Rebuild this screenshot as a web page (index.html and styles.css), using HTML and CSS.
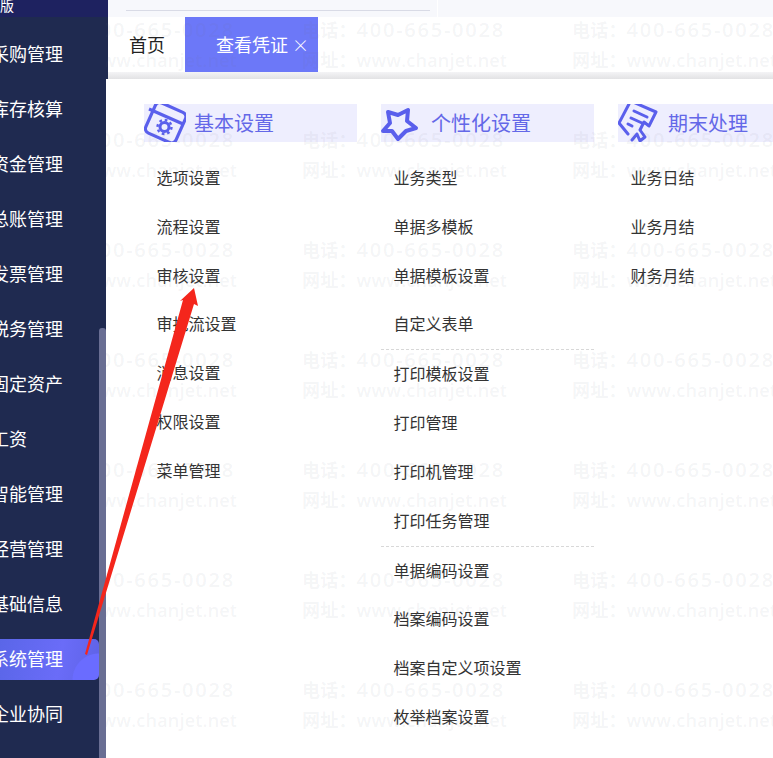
FILE: index.html
```html
<!DOCTYPE html>
<html lang="zh-CN">
<head>
<meta charset="utf-8">
<title>系统管理</title>
<link rel="stylesheet" href="styles.css">
</head>
<body>
<div class="app">
  <aside class="sidebar">
    <div class="brand">版</div>
    <nav class="nav">
      <div class="nav-item">采购管理</div>
      <div class="nav-item">库存核算</div>
      <div class="nav-item">资金管理</div>
      <div class="nav-item">总账管理</div>
      <div class="nav-item">发票管理</div>
      <div class="nav-item">税务管理</div>
      <div class="nav-item">固定资产</div>
      <div class="nav-item">工资</div>
      <div class="nav-item">智能管理</div>
      <div class="nav-item">经营管理</div>
      <div class="nav-item">基础信息</div>
      <div class="nav-item active">系统管理</div>
      <div class="nav-item">企业协同</div>
    </nav>
    <div class="scrollbar"></div>
  </aside>
  <main class="main">
    <div class="topbar"><div class="topline"></div><div class="topdivider"></div></div>
    <div class="tabs">
      <div class="tab">首页</div>
      <div class="tab tab-active">查看凭证<span class="close">×</span></div>
    </div>
    <div class="shadow"></div>
    <div class="panel">
      <section class="col">
        <h2 class="head">
          <svg class="icon" viewBox="0 0 42 38"><g fill="none" stroke="#5a5fec" stroke-width="3.200"><rect x="5" y="2" width="33" height="33" rx="5" transform="rotate(24 21 19)"/><path d="M5 5 L39 20"/></g><circle cx="20.500" cy="23" r="4.500" fill="none" stroke="#5a5fec" stroke-width="3"/><circle cx="20.500" cy="23" r="7" fill="none" stroke="#5a5fec" stroke-width="2.400" stroke-dasharray="2.700 2.800"/></svg>
          <span>基本设置</span>
        </h2>
        <ul class="list">
          <li>选项设置</li><li>流程设置</li><li>审核设置</li><li>审批流设置</li><li>消息设置</li><li>权限设置</li><li>菜单管理</li>
        </ul>
      </section>
      <section class="col">
        <h2 class="head">
          <svg class="icon" viewBox="0 0 42 38"><path d="M7 8 L17 11 L27 6 L26 17 L35 24 L25 27 L17 35 L11 27 L2 27 L9 19 Z" fill="none" stroke="#5a5fec" stroke-width="4" stroke-linejoin="round"/></svg>
          <span>个性化设置</span>
        </h2>
        <ul class="list">
          <li>业务类型</li><li>单据多模板</li><li>单据模板设置</li><li>自定义表单</li>
        </ul>
        <ul class="list sep">
          <li>打印模板设置</li><li>打印管理</li><li>打印机管理</li><li>打印任务管理</li>
        </ul>
        <ul class="list sep">
          <li>单据编码设置</li><li>档案编码设置</li><li>档案自定义项设置</li><li>枚举档案设置</li>
        </ul>
      </section>
      <section class="col">
        <h2 class="head">
          <svg class="icon" viewBox="0 0 42 38"><g fill="none" stroke="#5a5fec" stroke-width="3" stroke-linecap="round" stroke-linejoin="round"><path d="M11 0 L1 19 L10 30 M15 -2 L38 8 L31 22 L26 18 L22 26 L27 33 L22 37 L19 30 L14 36"/><path d="M16 7 L29 13 M13 14 L24 19 M10 20 L14 22"/></g></svg>
          <span>期末处理</span>
        </h2>
        <ul class="list">
          <li>业务日结</li><li>业务月结</li><li>财务月结</li>
        </ul>
      </section>
    </div>
  </main>
  <div class="watermark">
    <div class="mark"><p>电话：<span class="num">400-665-0028</span></p><p>网址：www.chanjet.net</p></div>
    <div class="mark"><p>电话：<span class="num">400-665-0028</span></p><p>网址：www.chanjet.net</p></div>
    <div class="mark"><p>电话：<span class="num">400-665-0028</span></p><p>网址：www.chanjet.net</p></div>
    <div class="mark"><p>电话：<span class="num">400-665-0028</span></p><p>网址：www.chanjet.net</p></div>
    <div class="mark"><p>电话：<span class="num">400-665-0028</span></p><p>网址：www.chanjet.net</p></div>
    <div class="mark"><p>电话：<span class="num">400-665-0028</span></p><p>网址：www.chanjet.net</p></div>
    <div class="mark"><p>电话：<span class="num">400-665-0028</span></p><p>网址：www.chanjet.net</p></div>
    <div class="mark"><p>电话：<span class="num">400-665-0028</span></p><p>网址：www.chanjet.net</p></div>
    <div class="mark"><p>电话：<span class="num">400-665-0028</span></p><p>网址：www.chanjet.net</p></div>
    <div class="mark"><p>电话：<span class="num">400-665-0028</span></p><p>网址：www.chanjet.net</p></div>
    <div class="mark"><p>电话：<span class="num">400-665-0028</span></p><p>网址：www.chanjet.net</p></div>
    <div class="mark"><p>电话：<span class="num">400-665-0028</span></p><p>网址：www.chanjet.net</p></div>
    <div class="mark"><p>电话：<span class="num">400-665-0028</span></p><p>网址：www.chanjet.net</p></div>
    <div class="mark"><p>电话：<span class="num">400-665-0028</span></p><p>网址：www.chanjet.net</p></div>
    <div class="mark"><p>电话：<span class="num">400-665-0028</span></p><p>网址：www.chanjet.net</p></div>
    <div class="mark"><p>电话：<span class="num">400-665-0028</span></p><p>网址：www.chanjet.net</p></div>
    <div class="mark"><p>电话：<span class="num">400-665-0028</span></p><p>网址：www.chanjet.net</p></div>
    <div class="mark"><p>电话：<span class="num">400-665-0028</span></p><p>网址：www.chanjet.net</p></div>
    <div class="mark"><p>电话：<span class="num">400-665-0028</span></p><p>网址：www.chanjet.net</p></div>
    <div class="mark"><p>电话：<span class="num">400-665-0028</span></p><p>网址：www.chanjet.net</p></div>
    <div class="mark"><p>电话：<span class="num">400-665-0028</span></p><p>网址：www.chanjet.net</p></div>
  </div>
  <svg class="arrow" viewBox="0 0 773 758"><polygon points="194,288 198,306 194,304 87,655 85,654 183,300 180,301" fill="#f4261c"/></svg>
</div>
</body>
</html>
```
FILE: styles.css
```css
* { box-sizing: border-box; }
html, body { margin: 0; padding: 0; height: 100%; overflow: hidden; background: #fff; }
body { font-family: "Noto Sans CJK SC", "Noto Sans", sans-serif; }
.app { position: relative; display: flex; width: 773px; height: 758px; overflow: hidden; }

.sidebar { position: relative; z-index: 2; flex: 0 0 106px; width: 106px; height: 758px; background: #1f2a50; overflow: hidden; }
.brand { height: 17px; background: #1e2260; color: #fff; font-size: 14px; line-height: 10px; white-space: nowrap; }
.nav { padding-top: 10px; padding-right: 7px; }
.nav-item { height: 55px; display: flex; align-items: center; padding-bottom: 3px; text-indent: -9px; color: #fff; font-size: 18px; white-space: nowrap; }
.nav-item.active { position: relative; height: 41px; margin: 7px 0; border-radius: 0 5px 5px 0; color: #fff;
  background: radial-gradient(circle at 100% 100%, #6a6cff 0 26px, transparent 27px), linear-gradient(100deg, #5a66e8, #6a6cf8 60%, #5e62e6); }
.scrollbar { position: absolute; right: 0; top: 328px; bottom: 0; width: 7px; background: #696e93; border-radius: 3px 3px 0 0; }

.main { flex: 1; min-width: 0; }
.topbar { position: relative; height: 17px; background: #f7f8fc; padding: 10px 0 0 18px; border-left: 2px solid #1e2260; }
.topline { width: 304px; height: 1px; background: #d9dbe6; }
.topdivider { position: absolute; left: 329px; top: 0; width: 1px; height: 17px; background: #fff; }
.tabs { display: flex; height: 55px; background: #fff; padding-left: 21px; border-left: 2px solid #1f2a50; }
.tab { font-size: 18px; line-height: 55px; color: #222; width: 56px; }
.tab-active { width: 133px; padding-left: 31px; background: #6c78f8; color: #fff; display: flex; white-space: nowrap; }
.close { margin-left: 4px; font-size: 17px; font-weight: 300; }
.shadow { height: 7px; background: linear-gradient(#f4f4f6, #e2e2e4); border-left: 2px solid #1f2a50; }

.panel { display: grid; grid-template-columns: repeat(3, 213px); column-gap: 24px; padding: 25px 0 0 38px; width: 780px; background: #fff; height: 679px; }
.col { min-width: 0; }
.head { display: flex; align-items: center; height: 38px; margin: 0; background: #eeeefe; color: #6468e8; font-size: 20px; font-weight: 400; overflow: hidden; }
.head span { padding-bottom: 2px; }
.icon { flex: 0 0 42px; width: 42px; height: 38px; margin-right: 8px; overflow: hidden; }
.list { list-style: none; margin: 12px 0 0; padding: 0 0 0 12.6px; }
.list li { height: 48.83px; line-height: 47px; font-size: 16px; color: #333; white-space: nowrap; }
.list.sep { margin: 0; border-top: 1px dashed #d8d8d8; }

.watermark { position: absolute; inset: 0; padding: 14.5px 0 0 32px; display: grid; grid-template-columns: repeat(3, 270px); grid-auto-rows: 110px; pointer-events: none; overflow: hidden; }
.mark p { margin: 0; height: 30px; line-height: 30px; font-family: "Open Sans", "Noto Sans CJK SC", sans-serif; font-size: 18px; font-weight: 600; letter-spacing: .2px; color: rgba(110, 115, 135, .08); white-space: nowrap; }
.num { font-size: 20px; letter-spacing: 1.75px; }
.arrow { position: absolute; z-index: 3; inset: 0; width: 773px; height: 758px; pointer-events: none; }
```
